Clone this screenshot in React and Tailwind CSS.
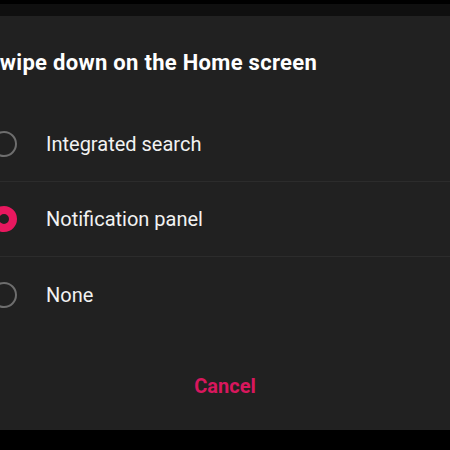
import React, { useState } from 'react';

const options = ['Integrated search', 'Notification panel', 'None'];

const Radio = ({ checked }) => (
  <span
    className={`block w-[26px] h-[26px] rounded-full shrink-0 ${
      checked ? 'border-[8px] border-[#e8185f]' : 'border-2 border-[#6e6e6e]'
    }`}
  />
);

export default function App() {
  const [selected, setSelected] = useState(1);

  return (
    <div
      className="w-[450px] h-[450px] bg-black overflow-hidden flex flex-col"
      style={{ fontFamily: 'Roboto, "Noto Sans", sans-serif' }}
    >
      <div className="h-[4px] bg-black" />
      <div className="h-[12px] bg-[#0f0f0f]" />

      {/* Dialog */}
      <div className="h-[414px] bg-[#212121] overflow-hidden">
        <div className="-ml-[12px] w-[480px]">
          <h1 className="-ml-[2px] pt-[35px] h-[91px] text-[22px] leading-[24px] font-bold tracking-[0.3px] text-white">
            Swipe down on the Home screen
          </h1>

          <div>
            {options.map((label, i) => (
              <button
                key={label}
                onClick={() => setSelected(i)}
                className={`w-full h-[75px] flex items-center pl-[3px] text-left ${
                  i < options.length - 1 ? 'border-b border-[#2c2c2c]' : ''
                }`}
              >
                <Radio checked={selected === i} />
                <span className="ml-[29px] text-[20px] text-[#f2f2f2]">{label}</span>
              </button>
            ))}
          </div>
        </div>

        <div className="flex justify-center pt-[42px]">
          <button className="text-[20px] leading-[24px] font-bold text-[#d8175d]">Cancel</button>
        </div>
      </div>
    </div>
  );
}
